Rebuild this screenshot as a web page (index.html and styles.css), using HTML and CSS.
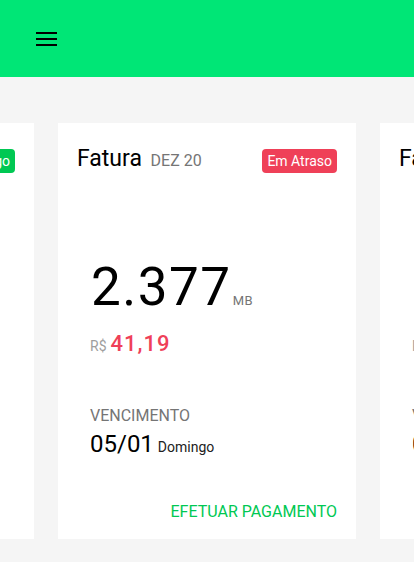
FILE: index.html
```html
<!DOCTYPE html>
<html lang="pt-BR">
<head>
<meta charset="utf-8">
<title>Faturas</title>
<link rel="stylesheet" href="styles.css">
</head>
<body>
<header class="topbar">
  <button class="menu-btn" aria-label="Menu">
    <svg width="21" height="14" viewBox="0 0 21 14"><rect x="0" y="0" width="21" height="2"/><rect x="0" y="6" width="21" height="2"/><rect x="0" y="12" width="21" height="2"/></svg>
  </button>
</header>
<main class="carousel">
  <section class="card">
    <div class="card-head">
      <h2 class="title">Fatura <span class="period">NOV 20</span></h2>
      <span class="badge badge-paid">Pago</span>
    </div>
    <div class="card-body">
      <div class="usage"><span class="usage-value">1.942</span><span class="usage-unit">MB</span></div>
      <div class="price"><span class="currency">R$</span> <span class="amount amount-paid">38,90</span></div>
      <div class="due-label">VENCIMENTO</div>
      <div class="due"><span class="due-date">05/12</span> <span class="due-day">Sábado</span></div>
    </div>
  </section>
  <section class="card">
    <div class="card-head">
      <h2 class="title">Fatura <span class="period">DEZ 20</span></h2>
      <span class="badge badge-late">Em Atraso</span>
    </div>
    <div class="card-body">
      <div class="usage"><span class="usage-value">2.377</span><span class="usage-unit">MB</span></div>
      <div class="price"><span class="currency">R$</span> <span class="amount">41,19</span></div>
      <div class="due-label">VENCIMENTO</div>
      <div class="due"><span class="due-date">05/01</span> <span class="due-day">Domingo</span></div>
    </div>
    <div class="card-foot"><a class="action">EFETUAR PAGAMENTO</a></div>
  </section>
  <section class="card">
    <div class="card-head">
      <h2 class="title">Fatura <span class="period">JAN 21</span></h2>
      <span class="badge badge-open">Em Aberto</span>
    </div>
    <div class="card-body">
      <div class="usage"><span class="usage-value">1.204</span><span class="usage-unit">MB</span></div>
      <div class="price"><span class="currency">R$</span> <span class="amount amount-open">29,90</span></div>
      <div class="due-label">VENCIMENTO</div>
      <div class="due"><span class="due-date">05/02</span> <span class="due-day">Sexta</span></div>
    </div>
    <div class="card-foot"><a class="action">EFETUAR PAGAMENTO</a></div>
  </section>
</main>
</body>
</html>
```
FILE: styles.css
```css
* { box-sizing: border-box; }
html, body {
  margin: 0;
  padding: 0;
  background: #f5f5f5;
  font-family: Roboto, "Noto Sans", Arial, sans-serif;
  color: #000;
  overflow: hidden;
}
.topbar {
  height: 77px;
  background: #00e676;
  display: flex;
  align-items: center;
  padding-left: 36px;
}
.menu-btn {
  border: 0;
  background: transparent;
  padding: 0;
  margin-top: 1px;
  display: flex;
  cursor: pointer;
}
.menu-btn svg { fill: #000; display: block; }
.carousel {
  display: flex;
  justify-content: center;
  gap: 24px;
  margin-top: 46px;
}
.card {
  flex: 0 0 298px;
  height: 416px;
  background: #fff;
  padding: 24px 19px 17px 19px;
  display: flex;
  flex-direction: column;
}
.card-head {
  display: flex;
  justify-content: space-between;
  align-items: flex-start;
}
.title {
  margin: 0;
  font-size: 23px;
  line-height: 24px;
  font-weight: 400;
  color: #000;
}
.period {
  font-size: 16px;
  color: #757575;
  margin-left: 3px;
}
.badge {
  margin-top: 2px;
  height: 24px;
  line-height: 24px;
  padding: 0 5px;
  border-radius: 4px;
  font-size: 14px;
  color: #fff;
}
.badge-late { background: #ef4058; }
.badge-paid { background: #00c853; }
.badge-open { background: #ffab00; }
.card-body {
  padding-left: 13px;
  margin-top: 88px;
}
.usage {
  line-height: 52px;
  height: 52px;
}
.usage-value {
  font-size: 53px;
  letter-spacing: 1.5px;
  margin-left: 1px;
  color: #000;
}
.usage-unit {
  font-size: 13px;
  letter-spacing: 0.5px;
  color: #757575;
  margin-left: 1px;
}
.price {
  margin-top: 18px;
  line-height: 26px;
  height: 26px;
}
.currency {
  font-size: 14px;
  color: #9e9e9e;
}
.amount {
  font-size: 22px;
  font-weight: 500;
  letter-spacing: 1px;
  color: #ef4058;
}
.amount-paid { color: #00c853; }
.amount-open { color: #000; }
.due-label {
  margin-top: 49px;
  font-size: 16px;
  line-height: 20px;
  color: #757575;
}
.due {
  margin-top: 4px;
  line-height: 28px;
}
.due-date { font-size: 24px; color: #000; }
.due-day { font-size: 14px; color: #212121; }
.card-foot {
  margin-top: auto;
  display: flex;
  justify-content: flex-end;
}
.action {
  font-size: 16px;
  line-height: 20px;
  color: #00c853;
  cursor: pointer;
}
```
